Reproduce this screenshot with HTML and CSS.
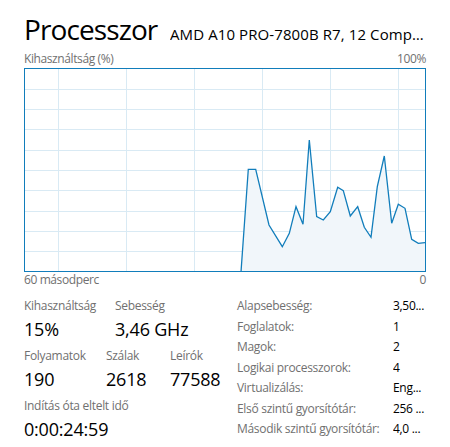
FILE: index.html
```html
<!DOCTYPE html>
<html lang="hu">
<head>
<meta charset="utf-8">
<title>Processzor</title>
<link rel="stylesheet" href="styles.css">
</head>
<body>
<div class="page">
  <div class="head">
    <h1 class="title">Processzor</h1>
    <div class="model">AMD A10 PRO-7800B R7, 12 Comp…</div>
  </div>
  <div class="axis axis-top"><span>Kihasználtság (%)</span><span>100%</span></div>
  <div class="chart">
    <svg class="graph" width="400" height="202" viewBox="0 0 400 202">
      <g class="grid">
        <line x1="0" y1="20.5" x2="400" y2="20.5"/>
        <line x1="0" y1="40.5" x2="400" y2="40.5"/>
        <line x1="0" y1="60.5" x2="400" y2="60.5"/>
        <line x1="0" y1="81.5" x2="400" y2="81.5"/>
        <line x1="0" y1="101.5" x2="400" y2="101.5"/>
        <line x1="0" y1="121.5" x2="400" y2="121.5"/>
        <line x1="0" y1="142.5" x2="400" y2="142.5"/>
        <line x1="0" y1="162.5" x2="400" y2="162.5"/>
        <line x1="0" y1="182.5" x2="400" y2="182.5"/>
        <line x1="33.5" y1="0" x2="33.5" y2="202"/>
        <line x1="101.5" y1="0" x2="101.5" y2="202"/>
        <line x1="169.5" y1="0" x2="169.5" y2="202"/>
        <line x1="237.5" y1="0" x2="237.5" y2="202"/>
        <line x1="305.5" y1="0" x2="305.5" y2="202"/>
        <line x1="373.5" y1="0" x2="373.5" y2="202"/>
      </g>
      <polygon class="area" points="216,202 223.3,100.3 230.7,100.3 244,156 257.3,177.7 264.3,164.3 271,137.7 278,155.3 284.3,71 291.7,147.7 298.3,151 305.3,142.7 312.7,118.3 318.3,121.7 325.3,147 332.7,137.7 339.3,158.3 346,168.3 352.3,117.7 359.3,87 366.7,154.3 373.3,135.3 380,139.3 386.7,170.3 393.3,174.3 400,173.7 400,202"/>
      <polyline class="line" points="216,203 223.3,100.3 230.7,100.3 244,156 257.3,177.7 264.3,164.3 271,137.7 278,155.3 284.3,71 291.7,147.7 298.3,151 305.3,142.7 312.7,118.3 318.3,121.7 325.3,147 332.7,137.7 339.3,158.3 346,168.3 352.3,117.7 359.3,87 366.7,154.3 373.3,135.3 380,139.3 386.7,170.3 393.3,174.3 400,173.7"/>
    </svg>
  </div>
  <div class="axis axis-bottom"><span>60 másodperc</span><span>0</span></div>

  <div class="details">
    <div class="stats">
      <div class="stat-row">
        <div class="stat w91"><div class="lbl">Kihasználtság</div><div class="val">15%</div></div>
        <div class="stat"><div class="lbl">Sebesség</div><div class="val">3,46 GHz</div></div>
      </div>
      <div class="stat-row">
        <div class="stat w82"><div class="lbl">Folyamatok</div><div class="val">190</div></div>
        <div class="stat w64"><div class="lbl">Szálak</div><div class="val">2618</div></div>
        <div class="stat"><div class="lbl">Leírók</div><div class="val">77588</div></div>
      </div>
      <div class="stat-row">
        <div class="stat"><div class="lbl">Indítás óta eltelt idő</div><div class="val">0:00:24:59</div></div>
      </div>
    </div>
    <div class="props">
      <div class="pk">Alapsebesség:</div><div class="pv">3,50...</div>
      <div class="pk">Foglalatok:</div><div class="pv">1</div>
      <div class="pk">Magok:</div><div class="pv">2</div>
      <div class="pk">Logikai processzorok:</div><div class="pv">4</div>
      <div class="pk">Virtualizálás:</div><div class="pv">Eng...</div>
      <div class="pk">Első szintű gyorsítótár:</div><div class="pv">256 ...</div>
      <div class="pk">Második szintű gyorsítótár:</div><div class="pv">4,0 ...</div>
    </div>
  </div>
</div>
</body>
</html>
```

FILE: styles.css
```css
* { box-sizing: border-box; }

body {
  margin: 0;
  background: #ffffff;
  color: #000000;
  font-family: "Open Sans", "Noto Sans", sans-serif;
}

.page {
  width: 450px;
  padding: 11px 24px 0 24px;
}

.head {
  display: flex;
  align-items: baseline;
  height: 36px;
  white-space: nowrap;
}

.title {
  margin: 0;
  width: 146px;
  flex: none;
  font-size: 28px;
  font-weight: 400;
  line-height: 36px;
  letter-spacing: -0.9px;
}

.model {
  font-size: 15px;
  line-height: 20px;
  overflow: hidden;
  letter-spacing: 0.1px;
}

.axis {
  display: flex;
  justify-content: space-between;
  font-size: 12px;
  line-height: 16px;
  color: #707070;
  letter-spacing: -0.4px;
}

.axis-top { margin-top: 4px; }

.chart {
  margin-top: 1px;
  width: 402px;
  height: 204px;
  border: 1px solid #117dbb;
}

.graph { display: block; }

.grid line {
  stroke: #d9eaf4;
  stroke-width: 1;
}

.area {
  fill: #f1f6fa;
  stroke: none;
}

.line {
  fill: none;
  stroke: #117dbb;
  stroke-width: 1.3;
  stroke-linejoin: miter;
}

.details {
  display: flex;
  margin-top: 9px;
}

.stats {
  width: 213px;
  padding-top: 1px;
  display: flex;
  flex-direction: column;
  gap: 7px;
}

.stat-row { display: flex; }

.w91 { width: 91px; }
.w82 { width: 82px; }
.w64 { width: 64px; }

.lbl {
  font-size: 12px;
  line-height: 16px;
  color: #707070;
  white-space: nowrap;
  letter-spacing: -0.3px;
}

.val {
  margin-top: 3px;
  font-size: 18px;
  line-height: 24px;
  white-space: nowrap;
  letter-spacing: -0.2px;
}

.props {
  display: grid;
  grid-template-columns: 156px 33px;
  font-size: 12px;
  line-height: 17px;
  letter-spacing: -0.3px;
}

.pk {
  color: #707070;
  white-space: nowrap;
}

.pv {
  white-space: nowrap;
  overflow: hidden;
}
```
